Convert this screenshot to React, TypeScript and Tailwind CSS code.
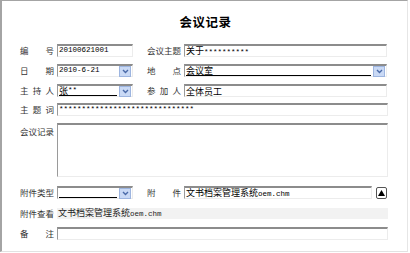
import React from "react";

const CJK = { fontFamily: '"Noto Sans CJK SC", "Noto Sans", sans-serif' };
const MONO = { fontFamily: '"Liberation Mono", "Noto Sans CJK SC", monospace' };

function Label({ text, w = 34 }: { text: string; w?: number }) {
  const chars = text.split("");
  return (
    <div
      className="flex justify-between text-[8.5px] leading-none text-[#333]"
      style={{ width: w }}
    >
      {chars.map((c, i) => (
        <span key={i}>{c}</span>
      ))}
    </div>
  );
}

function Box({
  children,
  className = "",
}: {
  children?: React.ReactNode;
  className?: string;
}) {
  return (
    <div
      className={
        "relative flex items-center bg-white border-t-2 border-l border-t-[#8c8c8c] border-l-[#9a9a9a] border-r border-b border-r-[#ececec] border-b-[#ececec] " +
        className
      }
    >
      {children}
    </div>
  );
}

function DropBtn() {
  return (
    <div className="absolute right-[1px] top-[0px] w-[12px] h-[11px] bg-[#c9d9f5] border border-[#9db5e0] flex items-center justify-center">
      <svg width="7" height="5" viewBox="0 0 7 5">
        <path d="M1 1 L3.5 3.5 L6 1" stroke="#4a6aa8" strokeWidth="1.4" fill="none" />
      </svg>
    </div>
  );
}

function Select({
  children,
  width,
  underline = false,
}: {
  children?: React.ReactNode;
  width: number;
  underline?: boolean;
}) {
  return (
    <Box className="h-[13px]">
      <div style={{ width }} className="h-full relative">
        <div
          className={
            "absolute left-[1px] top-[0px] h-[10px] flex items-center text-[9px] leading-none text-black " +
            (underline ? "border-b-[1.5px] border-black" : "")
          }
          style={{ width: width - 16, ...CJK }}
        >
          {children}
        </div>
        <DropBtn />
      </div>
    </Box>
  );
}

export default function App() {
  return (
    <div className="w-[410px] h-[253px] bg-white overflow-hidden" style={CJK}>
      <div className="w-[408px] h-[252px] border-l-2 border-t border-l-[#a4a4a4] border-t-[#a4a4a4] border-r border-b border-r-[#e6e6e6] border-b-[#e2e2e2] flex flex-col">
        <div className="h-[42px] flex items-center justify-center pt-[1px]">
          <span className="text-[12.5px] font-bold text-black tracking-[0.5px] pl-[2px]">
            会议记录
          </span>
        </div>

        {/* Row 1 */}
        <div className="flex items-center h-[13px] ml-[18px] mt-[1px]">
          <Label text="编号" />
          <div className="w-[3px]" />
          <Box className="h-[13px] w-[76px]">
            <span className="text-[7.5px] leading-none pl-[1px] text-black" style={MONO}>
              20100621001
            </span>
          </Box>
          <div className="w-[14px]" />
          <Label text="会议主题" />
          <div className="w-[3px]" />
          <Box className="h-[13px] w-[203px]">
            <span className="text-[9px] leading-none pl-[1px] text-black">
              关于<span style={MONO} className="text-[7.5px]">**********</span>
            </span>
          </Box>
        </div>

        {/* Row 2 */}
        <div className="flex items-center h-[13px] ml-[18px] mt-[7px]">
          <Label text="日期" />
          <div className="w-[3px]" />
          <Select width={74}>
            <span style={MONO} className="text-[7.5px]">2010-6-21</span>
          </Select>
          <div className="w-[14px]" />
          <Label text="地点" />
          <div className="w-[3px]" />
          <Select width={201} underline>
            会议室
          </Select>
        </div>

        {/* Row 3 */}
        <div className="flex items-center h-[13px] ml-[18px] mt-[7px]">
          <Label text="主持人" />
          <div className="w-[3px]" />
          <Select width={74} underline>
            张<span style={MONO} className="text-[7.5px]">**</span>
          </Select>
          <div className="w-[14px]" />
          <Label text="参加人" />
          <div className="w-[3px]" />
          <Box className="h-[13px] w-[203px]">
            <span className="text-[9px] leading-none pl-[1px] text-black">全体员工</span>
          </Box>
        </div>

        {/* Row 4 */}
        <div className="flex items-center h-[13px] ml-[18px] mt-[6px]">
          <Label text="主题词" />
          <div className="w-[3px]" />
          <Box className="h-[13px] w-[331px]">
            <span className="text-[7.5px] leading-none pl-[1px] text-black" style={MONO}>
              ******************************
            </span>
          </Box>
        </div>

        {/* Row 5 textarea */}
        <div className="flex items-start ml-[18px] mt-[7px]">
          <div className="pt-[4px]">
            <Label text="会议记录" />
          </div>
          <div className="w-[3px]" />
          <Box className="h-[54px] w-[331px]" />
        </div>

        {/* Row 6 */}
        <div className="flex items-center h-[13px] ml-[18px] mt-[9px]">
          <Label text="附件类型" />
          <div className="w-[3px]" />
          <Select width={74} underline>
            {""}
          </Select>
          <div className="w-[14px]" />
          <Label text="附件" />
          <div className="w-[3px]" />
          <Box className="h-[13px] w-[188px]">
            <span className="text-[9px] leading-none pl-[1px] text-black">
              文书档案管理系统<span style={MONO} className="text-[7.5px]">oem.chm</span>
            </span>
          </Box>
          <div className="w-[4px]" />
          <div className="w-[11px] h-[12px] border border-[#555] rounded-[2px] bg-white flex items-center justify-center">
            <svg width="7" height="6" viewBox="0 0 7 6">
              <path d="M3.5 0 L7 6 L0 6 Z" fill="#000" />
            </svg>
          </div>
        </div>

        {/* Row 7 */}
        <div className="flex items-center h-[11px] ml-[18px] mt-[9px]">
          <Label text="附件查看" />
          <div className="w-[3px]" />
          <div className="w-[331px] h-[11px] bg-[#f2f2f2] flex items-center">
            <span className="text-[9px] leading-none pl-[1px] text-[#222]">
              文书档案管理系统<span style={MONO} className="text-[7.5px]">oem.chm</span>
            </span>
          </div>
        </div>

        {/* Row 8 */}
        <div className="flex items-center h-[13px] ml-[18px] mt-[8px]">
          <Label text="备注" />
          <div className="w-[3px]" />
          <Box className="h-[13px] w-[331px]" />
        </div>
      </div>
    </div>
  );
}
